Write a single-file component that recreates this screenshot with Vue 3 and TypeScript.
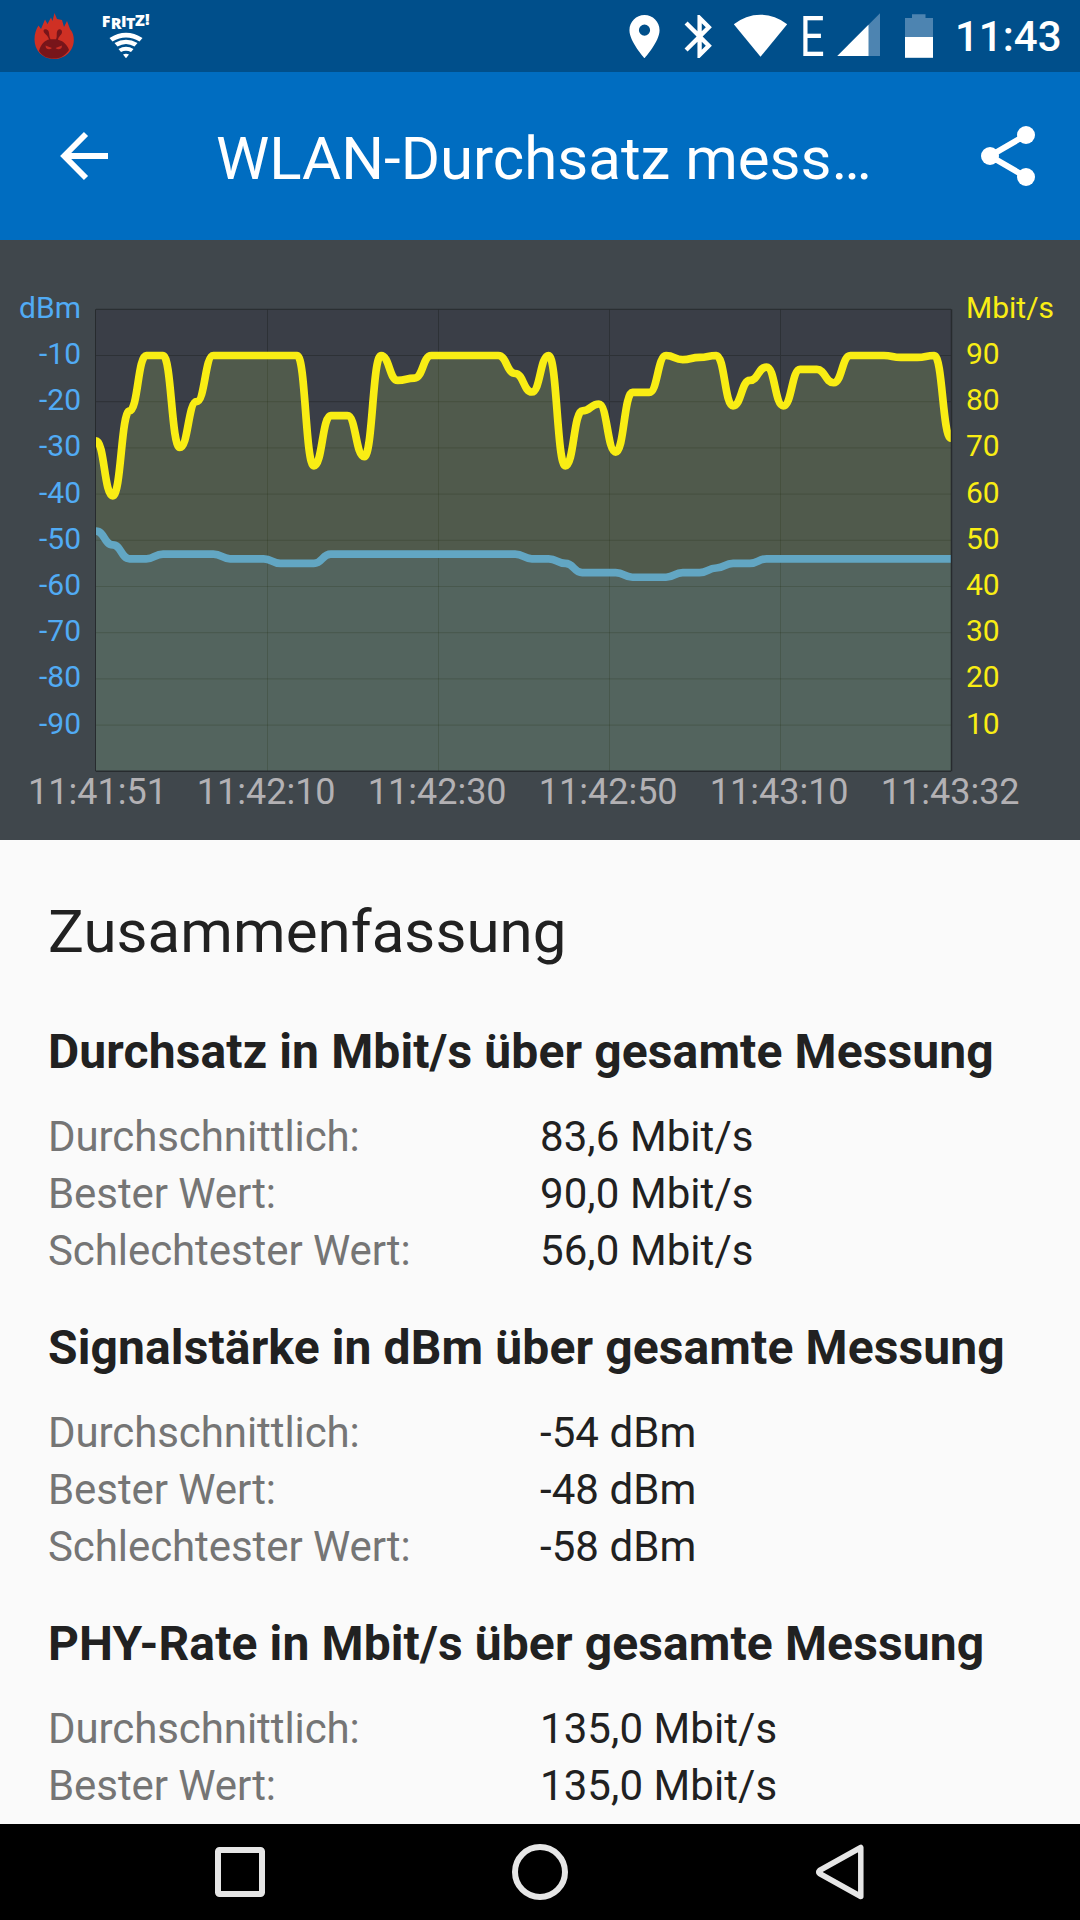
<script setup lang="ts">
interface Row {
  label: string
  value: string
}
interface Section {
  title: string
  rows: Row[]
}

const sections: Section[] = [
  {
    title: 'Durchsatz in Mbit/s über gesamte Messung',
    rows: [
      { label: 'Durchschnittlich:', value: '83,6 Mbit/s' },
      { label: 'Bester Wert:', value: '90,0 Mbit/s' },
      { label: 'Schlechtester Wert:', value: '56,0 Mbit/s' },
    ],
  },
  {
    title: 'Signalstärke in dBm über gesamte Messung',
    rows: [
      { label: 'Durchschnittlich:', value: '-54 dBm' },
      { label: 'Bester Wert:', value: '-48 dBm' },
      { label: 'Schlechtester Wert:', value: '-58 dBm' },
    ],
  },
  {
    title: 'PHY-Rate in Mbit/s über gesamte Messung',
    rows: [
      { label: 'Durchschnittlich:', value: '135,0 Mbit/s' },
      { label: 'Bester Wert:', value: '135,0 Mbit/s' },
    ],
  },
]

// Plot area inside the chart panel
const left = 96
const right = 951
const top = 69.3
const bottom = 531.3
const unit = (bottom - top) / 100

const throughput: number[] = [
  71.5, 59.6, 78, 90, 90, 70.1, 80, 90, 90, 90, 90, 90, 90, 66.1, 77, 77, 68.1, 90, 84.6, 85.1,
  90, 90, 90, 90, 90, 86.1, 82.1, 90, 66.1, 78, 79.5, 69.1, 82, 82, 90, 89.1, 89.6, 90, 79.1, 84.6,
  87.5, 79.1, 87, 87, 84.1, 90, 90, 90, 89.6, 89.6, 90, 72.1,
]
const signal: number[] = [
  -48, -51, -54, -54, -53, -53, -53, -53, -54, -54, -54, -55, -55, -55, -53, -53, -53, -53, -53, -53,
  -53, -53, -53, -53, -53, -53, -54, -54, -55, -57, -57, -57, -58, -58, -58, -57, -57, -56, -55, -55,
  -54, -54, -54, -54, -54, -54, -54, -54, -54, -54, -54, -54,
]

// Smooth line whose tangent is horizontal in every sample
function smooth(values: number[], max: number): string {
  const step = (right - left) / (values.length - 1)
  const y = (v: number) => (top + (max - v) * unit).toFixed(2)
  let d = `M${left} ${y(values[0])}`
  for (let i = 1; i < values.length; i++) {
    const x = left + i * step
    const mid = (x - step / 2).toFixed(2)
    d += `C${mid} ${y(values[i - 1])} ${mid} ${y(values[i])} ${x.toFixed(2)} ${y(values[i])}`
  }
  return d
}
const close = `V${bottom}H${left}Z`
const throughputLine = smooth(throughput, 100)
const signalLine = smooth(signal, 0)

const levels = [1, 2, 3, 4, 5, 6, 7, 8, 9]
const times = ['11:41:51', '11:42:10', '11:42:30', '11:42:50', '11:43:10', '11:43:32']
const levelY = (n: number) => top + n * 10 * unit
const timeX = (i: number) => left + i * 171
const timeLabelX = (i: number) => timeX(i) + (i === 0 ? 1.5 : -0.8)
</script>

<template>
  <div class="screen">
    <header class="status">
      <svg class="antutu" width="42" height="48" viewBox="33 12 42 48">
        <path fill="#cf3024" d="M54 59C42 59 34.500 50 34.500 39.500C34.500 34 36 29.500 38.500 25.500L41 29L45 19.500L47.500 24L51 17.500L52.500 21L54.500 13L57 19L62 20L64 27L67 21L70 29C73 32 73.800 36 73.800 40C73.800 51 65 59 54 59Z" />
        <path fill="#78151a" d="M39 51C41 43 46 40 49 39.500C48 35 44 34 43.500 31C43.500 28.500 47 28.500 48.500 31C49.500 33.500 49 37 50.500 39.200H56C57.500 37 56 33 57.500 30.500C59 28.500 62 29 62 32C62 35 58.500 36 58 39.700C64 41 68 46 69 50C65 56 60 58.500 54 58.500C47 58.500 42 56 39 51Z" />
        <path fill="#c92d24" d="M45.500 45.500L52 48Q49 50.500 46 48ZM62 45.500L55.500 48Q58.500 50.500 61.500 48Z" />
      </svg>
      <svg class="fritz" width="60" height="72" viewBox="96 0 60 72">
        <text class="fritz-text" x="101.800 110.800 120.900 125.900 135 145" y="27.300 28.600 26.600 28.600 26 25">FRITZ!</text>
        <path fill="#fff" d="M109.500 38Q126 27.500 142.500 38L139.500 41.500Q126 33.500 112.500 41.500ZM114.500 43Q126 36.500 137.500 43L134.500 46.500Q126 41.500 117.500 46.500ZM118.500 49Q126 44.500 133.500 49L131 52Q126 49.500 121 52ZM123 54.500Q126 53 129 54.500L126 58.300Z" />
      </svg>
      <svg class="pin" width="34" height="48" viewBox="628 12 34 48">
        <path fill="#fff" transform="translate(618.700 10.800) scale(2.150)" d="M12 2C8.130 2 5 5.130 5 9c0 5.250 7 13 7 13s7-7.750 7-13c0-3.870-3.130-7-7-7zm0 9.600a2.600 2.600 0 1 1 0-5.200 2.600 2.600 0 0 1 0 5.200z" />
      </svg>
      <svg class="bt" width="34" height="48" viewBox="681 12 34 48">
        <path fill="#fff" transform="translate(673.800 10.700) scale(2.150)" d="M17.710 7.710L12 2h-1v7.590L6.410 5 5 6.410 10.590 12 5 17.590 6.410 19 11 14.410V22h1l5.710-5.710-4.300-4.290 4.300-4.290zM13 5.830l1.880 1.880L13 9.590V5.830zm1.880 10.460L13 18.170v-3.760l1.880 1.880z" />
      </svg>
      <svg class="wifi" width="57" height="48" viewBox="732 12 57 48">
        <path fill="#fff" d="M733.800 24.300A42 42 0 0 1 787.200 24.300L760.500 56.800Z" />
      </svg>
      <svg class="edge" width="32" height="72" viewBox="797 0 32 72">
        <text class="edge-text" transform="translate(799.800 55.500) scale(0.780 1)">E</text>
      </svg>
      <svg class="cell" width="46" height="48" viewBox="836 12 46 48">
        <path fill="#4d84b1" d="M837.300 56L880 13.300V56Z" />
        <path fill="#fff" d="M837.300 56L868.500 24.800V56Z" />
      </svg>
      <svg class="battery" width="30" height="48" viewBox="904 12 30 48">
        <path fill="#4d84b1" d="M905 18H912V14.300H925.500V18H933V37H905Z" />
        <path fill="#fff" d="M905 37H933V57.800H905Z" />
      </svg>
      <span class="clock">11:43</span>
    </header>

    <nav class="appbar">
      <svg width="56" height="56" viewBox="56 128 56 56">
        <path d="M108 156H65M86 134L64.200 156L86 178" fill="none" stroke="#fff" stroke-width="5.800" />
      </svg>
      <h1>WLAN-Durchsatz mess…</h1>
      <svg width="64" height="68" viewBox="976 122 64 68">
        <path d="M1026 135L990 156L1026 177" fill="none" stroke="#fff" stroke-width="6" />
        <circle cx="1026" cy="135" r="9" fill="#fff" />
        <circle cx="990" cy="156" r="9" fill="#fff" />
        <circle cx="1026" cy="177" r="9" fill="#fff" />
      </svg>
    </nav>

    <svg class="chart" width="1080" height="600" viewBox="0 0 1080 600">
      <defs>
        <clipPath id="plot"><rect :x="left" :y="top" :width="right - left" :height="bottom - top" /></clipPath>
        <clipPath id="filled"><path :d="throughputLine + close" /></clipPath>
      </defs>
      <rect :x="left" :y="top" :width="right - left" :height="bottom - top" fill="#3a3e47" />
      <g stroke="#2d3136" stroke-width="1">
        <line v-for="n in levels" :key="n" :x1="left" :x2="right" :y1="levelY(n)" :y2="levelY(n)" />
        <line v-for="n in 4" :key="'v' + n" :x1="timeX(n) + 0.5" :x2="timeX(n) + 0.5" :y1="top" :y2="bottom" />
      </g>
      <g clip-path="url(#plot)">
        <path :d="throughputLine + close" fill="#505a4c" />
        <path :d="signalLine + close" fill="#53645e" />
        <g clip-path="url(#filled)" stroke="#1c280c" stroke-opacity="0.200" stroke-width="1">
          <line v-for="n in levels" :key="n" :x1="left" :x2="right" :y1="levelY(n)" :y2="levelY(n)" />
          <line v-for="n in 4" :key="'v' + n" :x1="timeX(n) + 0.5" :x2="timeX(n) + 0.5" :y1="top" :y2="bottom" />
        </g>
        <path :d="signalLine" fill="none" stroke="#62a6c3" stroke-width="7.700" />
        <path :d="throughputLine" fill="none" stroke="#f9ed14" stroke-width="7.700" />
      </g>
      <g stroke="#272b2e">
        <line :x1="left" :x2="right" :y1="top" :y2="top" stroke-width="1" />
        <line :x1="left - 0.5" :x2="left - 0.5" :y1="top" :y2="bottom" stroke-width="1" />
        <line :x1="right + 0.5" :x2="right + 0.5" :y1="top" :y2="bottom" stroke-width="1.500" />
        <line :x1="left" :x2="right" :y1="bottom" :y2="bottom" stroke-width="1.500" />
      </g>
      <g class="scale dbm">
        <text x="81" y="78">dBm</text>
        <text v-for="n in levels" :key="n" x="81" :y="levelY(n) + 8.500">-{{ n * 10 }}</text>
      </g>
      <g class="scale mbit">
        <text x="966" y="78">Mbit/s</text>
        <text v-for="n in levels" :key="n" x="966" :y="levelY(n) + 8.500">{{ 100 - n * 10 }}</text>
      </g>
      <g class="times">
        <text v-for="(t, i) in times" :key="t" :x="timeLabelX(i)" y="564">{{ t }}</text>
      </g>
    </svg>

    <main class="summary">
      <h2>Zusammenfassung</h2>
      <section v-for="s in sections" :key="s.title">
        <h3>{{ s.title }}</h3>
        <div v-for="r in s.rows" :key="r.label" class="row">
          <span class="label">{{ r.label }}</span>
          <span class="value">{{ r.value }}</span>
        </div>
      </section>
    </main>

    <footer class="navbar">
      <svg width="60" height="60" viewBox="0 0 60 60">
        <rect x="8" y="8" width="44" height="44" rx="1.500" fill="none" stroke="#e6e6e6" stroke-width="6" />
      </svg>
      <svg width="60" height="60" viewBox="0 0 60 60">
        <circle cx="30" cy="30" r="25" fill="none" stroke="#e6e6e6" stroke-width="6" />
      </svg>
      <svg width="60" height="60" viewBox="0 0 60 60">
        <path d="M50.800 5.500V54.500L9.500 31.500Q7.800 30 9.500 28.500Z" fill="none" stroke="#e6e6e6" stroke-width="5.500" stroke-linejoin="round" />
      </svg>
    </footer>
  </div>
</template>

<style>
body {
  margin: 0;
}
</style>

<style scoped>
.screen {
  display: flex;
  flex-direction: column;
  width: 1080px;
  height: 1920px;
  overflow: hidden;
  background: #fafafa;
  font-family: Roboto, sans-serif;
  color: #212121;
}
svg {
  display: block;
  flex: none;
}
.status {
  display: flex;
  align-items: center;
  flex: none;
  height: 72px;
  background: #004f8b;
}
.antutu {
  margin-left: 33px;
}
.fritz {
  margin-left: 21px;
}
.fritz-text {
  font-family: 'Open Sans', sans-serif;
  font-weight: 800;
  font-size: 16px;
  fill: #fff;
}
.pin {
  margin-left: 472px;
}
.bt {
  margin-left: 19px;
}
.wifi {
  margin-left: 17px;
}
.edge {
  margin-left: 8px;
}
.edge-text {
  font-size: 56px;
  fill: #fff;
}
.cell {
  margin-left: 7px;
}
.battery {
  margin-left: 22px;
}
.clock {
  margin-left: 21px;
  padding-top: 2px;
  font-size: 42px;
  line-height: 50px;
  font-weight: 500;
  color: #fff;
}
.appbar {
  display: flex;
  align-items: center;
  box-sizing: border-box;
  flex: none;
  height: 168px;
  padding: 0 40px 0 56px;
  background: #006dc1;
}
.appbar h1 {
  flex: 1;
  margin: 5px 0 0 104px;
  font-size: 60px;
  line-height: 70px;
  font-weight: 400;
  color: #fff;
  white-space: nowrap;
}
.chart {
  background: #40474c;
}
.scale {
  font-size: 30px;
}
.dbm {
  fill: #51abf4;
  text-anchor: end;
}
.mbit {
  fill: #f9ed14;
}
.times {
  font-size: 36px;
  fill: #b3b1b4;
  text-anchor: middle;
}
.summary {
  flex: 1;
  min-height: 0;
  overflow: hidden;
  padding: 57px 48px 0;
}
h2 {
  margin: 0 0 57px;
  font-size: 60px;
  line-height: 70px;
  font-weight: 400;
  letter-spacing: 0.060px;
}
section {
  margin-bottom: 41px;
}
h3 {
  margin: 0 0 28px;
  font-size: 48px;
  line-height: 56px;
  font-weight: 700;
  letter-spacing: 0.120px;
  white-space: nowrap;
}
.row {
  display: flex;
  font-size: 42px;
  line-height: 57px;
}
.label {
  width: 492px;
  color: #757575;
  letter-spacing: -0.080px;
}
.value {
  letter-spacing: 0.080px;
}
.navbar {
  display: flex;
  align-items: center;
  justify-content: center;
  gap: 240px;
  flex: none;
  height: 96px;
  background: #000;
}
</style>
